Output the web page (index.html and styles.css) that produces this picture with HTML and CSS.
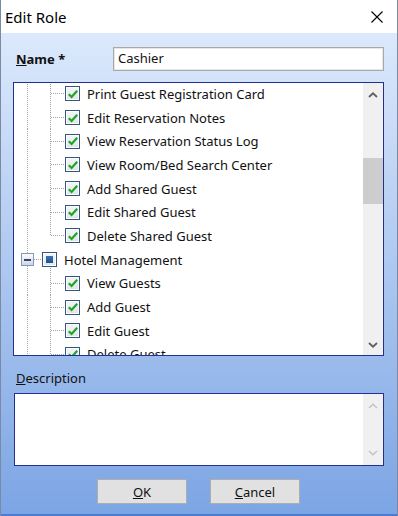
FILE: index.html
```html
<!DOCTYPE html>
<html>
<head>
    <meta charset="utf-8">
    <title>Edit Role</title>
    <link rel="stylesheet" href="styles.css">
</head>
<body>
    <div class="window">
        <div class="titlebar">
            <span class="title">Edit Role</span>
            <span class="close">
                <svg width="12" height="12" viewBox="0 0 12 12"><path d="M0.5 0.5L11.5 11.5M11.5 0.5L0.5 11.5" stroke="#000" stroke-width="1.1" fill="none"/></svg>
            </span>
        </div>

        <div class="dialog">
            <div class="name-row">
                <label class="name-label"><u>N</u>ame *</label>
                <div class="textbox">Cashier</div>
            </div>

            <div class="tree-box">
                <div class="tree">
                    <div class="node child first">
                        <span class="check on"><svg width="12" height="12" viewBox="0 0 12 12"><path d="M1.8 6.2L4.6 9L10.2 2.8" stroke="#1fa51f" stroke-width="2.2" fill="none"/></svg></span>
                        <span class="text">Print Guest Registration Card</span>
                    </div>
                    <div class="node child">
                        <span class="check on"><svg width="12" height="12" viewBox="0 0 12 12"><path d="M1.8 6.2L4.6 9L10.2 2.8" stroke="#1fa51f" stroke-width="2.2" fill="none"/></svg></span>
                        <span class="text">Edit Reservation Notes</span>
                    </div>
                    <div class="node child">
                        <span class="check on"><svg width="12" height="12" viewBox="0 0 12 12"><path d="M1.8 6.2L4.6 9L10.2 2.8" stroke="#1fa51f" stroke-width="2.2" fill="none"/></svg></span>
                        <span class="text">View Reservation Status Log</span>
                    </div>
                    <div class="node child">
                        <span class="check on"><svg width="12" height="12" viewBox="0 0 12 12"><path d="M1.8 6.2L4.6 9L10.2 2.8" stroke="#1fa51f" stroke-width="2.2" fill="none"/></svg></span>
                        <span class="text">View Room/Bed Search Center</span>
                    </div>
                    <div class="node child">
                        <span class="check on"><svg width="12" height="12" viewBox="0 0 12 12"><path d="M1.8 6.2L4.6 9L10.2 2.8" stroke="#1fa51f" stroke-width="2.2" fill="none"/></svg></span>
                        <span class="text">Add Shared Guest</span>
                    </div>
                    <div class="node child">
                        <span class="check on"><svg width="12" height="12" viewBox="0 0 12 12"><path d="M1.8 6.2L4.6 9L10.2 2.8" stroke="#1fa51f" stroke-width="2.2" fill="none"/></svg></span>
                        <span class="text">Edit Shared Guest</span>
                    </div>
                    <div class="node child last">
                        <span class="check on"><svg width="12" height="12" viewBox="0 0 12 12"><path d="M1.8 6.2L4.6 9L10.2 2.8" stroke="#1fa51f" stroke-width="2.2" fill="none"/></svg></span>
                        <span class="text">Delete Shared Guest</span>
                    </div>
                    <div class="node group">
                        <span class="expander"><i></i></span>
                        <span class="check partial"><i></i></span>
                        <span class="text">Hotel Management</span>
                    </div>
                    <div class="node child">
                        <span class="check on"><svg width="12" height="12" viewBox="0 0 12 12"><path d="M1.8 6.2L4.6 9L10.2 2.8" stroke="#1fa51f" stroke-width="2.2" fill="none"/></svg></span>
                        <span class="text">View Guests</span>
                    </div>
                    <div class="node child">
                        <span class="check on"><svg width="12" height="12" viewBox="0 0 12 12"><path d="M1.8 6.2L4.6 9L10.2 2.8" stroke="#1fa51f" stroke-width="2.2" fill="none"/></svg></span>
                        <span class="text">Add Guest</span>
                    </div>
                    <div class="node child">
                        <span class="check on"><svg width="12" height="12" viewBox="0 0 12 12"><path d="M1.8 6.2L4.6 9L10.2 2.8" stroke="#1fa51f" stroke-width="2.2" fill="none"/></svg></span>
                        <span class="text">Edit Guest</span>
                    </div>
                    <div class="node child">
                        <span class="check on"><svg width="12" height="12" viewBox="0 0 12 12"><path d="M1.8 6.2L4.6 9L10.2 2.8" stroke="#1fa51f" stroke-width="2.2" fill="none"/></svg></span>
                        <span class="text">Delete Guest</span>
                    </div>
                </div>
                <div class="vscroll">
                    <div class="arrow up"><svg width="10" height="6" viewBox="0 0 10 6"><path d="M1 5L5 1.3L9 5" stroke="#606060" stroke-width="1.8" fill="none"/></svg></div>
                    <div class="track"><div class="thumb"></div></div>
                    <div class="arrow down"><svg width="10" height="6" viewBox="0 0 10 6"><path d="M1 1L5 4.7L9 1" stroke="#606060" stroke-width="1.8" fill="none"/></svg></div>
                </div>
            </div>

            <div class="desc-label"><u>D</u>escription</div>
            <div class="memo">
                <div class="memo-area"></div>
                <div class="vscroll disabled">
                    <div class="arrow up"><svg width="10" height="6" viewBox="0 0 10 6"><path d="M1 5L5 1.3L9 5" stroke="#c2c2c2" stroke-width="1.5" fill="none"/></svg></div>
                    <div class="track"></div>
                    <div class="arrow up"><svg width="10" height="6" viewBox="0 0 10 6"><path d="M1 1L5 4.7L9 1" stroke="#c2c2c2" stroke-width="1.5" fill="none"/></svg></div>
                </div>
            </div>

            <div class="buttons">
                <button class="btn"><u>O</u>K</button>
                <button class="btn"><u>C</u>ancel</button>
            </div>
        </div>
    </div>
</body>
</html>
```

FILE: styles.css
```css
* {
    margin: 0;
    padding: 0;
    box-sizing: border-box;
}

body {
    font-family: "Noto Sans", "Open Sans", sans-serif;
    font-size: 13px;
    color: #111;
    width: 398px;
    height: 516px;
    overflow: hidden;
}

.window {
    width: 398px;
    height: 516px;
    display: flex;
    flex-direction: column;
    border-left: 1px solid #7b8aa2;
    border-right: 1px solid #7b8aa2;
}

.titlebar {
    height: 33px;
    flex-shrink: 0;
    background: white;
    display: flex;
    align-items: center;
    justify-content: space-between;
    padding: 0 14px 0 4px;
}

.title {
    font-size: 15px;
    color: #000;
}

.close {
    display: flex;
}

.dialog {
    flex: 1;
    background: linear-gradient(#dce9fc, #7ca5e4);
    padding: 14px 13px 0 12px;
    display: flex;
    flex-direction: column;
    border-bottom: 2px solid #4b7bd5;
}

.name-row {
    display: flex;
    align-items: center;
    height: 24px;
}

.name-label {
    width: 100px;
    padding-left: 3px;
    font-weight: bold;
    color: #111;
}

.textbox {
    flex: 1;
    height: 24px;
    background: white;
    border: 1px solid #a9a9a9;
    box-shadow: inset 0 0 0 1px #e6e6e6;
    padding-left: 4px;
    line-height: 21px;
}

.tree-box {
    margin-top: 11px;
    height: 274px;
    border: 1px solid #22318f;
    background: white;
    display: flex;
}

.tree {
    flex: 1;
    overflow: hidden;
}

/* dotted guide lines are painted as backgrounds on every row */
.node {
    height: 23.7px;
    display: flex;
    align-items: center;
    white-space: nowrap;
    --dot-v: repeating-linear-gradient(to bottom, #a3a3a3 0 1px, transparent 1px 2px);
    --dot-h: repeating-linear-gradient(to right, #a3a3a3 0 1px, transparent 1px 2px);
}

.node.first {
    margin-top: -1px;
}

.node.child {
    padding-left: 51px;
    background:
        var(--dot-v) 13px 0 / 1px 100% no-repeat,
        var(--dot-v) 36px 0 / 1px 100% no-repeat,
        var(--dot-h) 37px 50% / 14px 1px no-repeat;
}

.node.child.last {
    background:
        var(--dot-v) 13px 0 / 1px 100% no-repeat,
        var(--dot-v) 36px 0 / 1px 50% no-repeat,
        var(--dot-h) 37px 50% / 14px 1px no-repeat;
}

.node.group {
    padding-left: 7px;
    background:
        var(--dot-v) 13px 0 / 1px 100% no-repeat,
        var(--dot-h) 20px 50% / 8px 1px no-repeat,
        var(--dot-v) 36px 100% / 1px 4px no-repeat;
}

.expander {
    width: 13px;
    height: 13px;
    margin-right: 8px;
    border: 1px solid #8299bd;
    background: linear-gradient(#ffffff, #c9d7ec);
    display: flex;
    align-items: center;
    justify-content: center;
}

.expander i {
    width: 7px;
    height: 2px;
    background: #3c4656;
}

.check {
    width: 15px;
    height: 15px;
    flex-shrink: 0;
    margin-right: 7px;
    border: 1px solid #35577e;
    background: linear-gradient(#f4f6f8, #dfe4ea);
    box-shadow: inset 0 0 0 1px #ffffff;
    display: flex;
    align-items: center;
    justify-content: center;
}

.check.partial i {
    width: 7px;
    height: 7px;
    background: linear-gradient(#3c72b4, #1f4f91);
}

.text {
    color: #111;
}

.vscroll {
    width: 20px;
    flex-shrink: 0;
    background: #f0f0f0;
    display: flex;
    flex-direction: column;
}

.arrow {
    height: 24px;
    display: flex;
    align-items: center;
    justify-content: center;
}

.arrow.down {
    height: 20px;
}

.track {
    flex: 1;
}

.thumb {
    margin-top: 51px;
    height: 46px;
    background: #cdcdcd;
}

.desc-label {
    margin-top: 14px;
    height: 16px;
    line-height: 16px;
    padding-left: 3px;
    color: #111;
}

.memo {
    margin-top: 7px;
    margin-left: 1px;
    height: 73px;
    border: 1px solid #22318f;
    background: white;
    display: flex;
}

.memo-area {
    flex: 1;
}

.buttons {
    margin-top: 13px;
    display: flex;
    justify-content: center;
    gap: 23px;
}

.btn {
    width: 90px;
    height: 25px;
    background: #e1e1e1;
    border: 1px solid #adadad;
    font-family: inherit;
    font-size: 13px;
    color: #111;
}
```
